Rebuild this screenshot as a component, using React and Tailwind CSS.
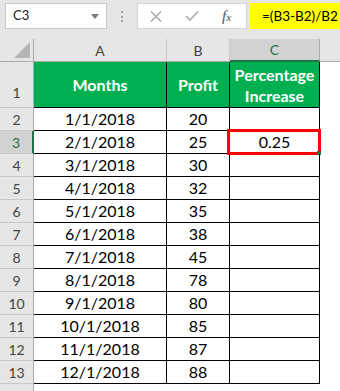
import React from "react";

const data = [
  ["1/1/2018", 20, ""],
  ["2/1/2018", 25, "0.25"],
  ["3/1/2018", 30, ""],
  ["4/1/2018", 32, ""],
  ["5/1/2018", 35, ""],
  ["6/1/2018", 38, ""],
  ["7/1/2018", 45, ""],
  ["8/1/2018", 78, ""],
  ["9/1/2018", 80, ""],
  ["10/1/2018", 85, ""],
  ["11/1/2018", 87, ""],
  ["12/1/2018", 88, ""],
];

function RowHead({ n, active, tall }) {
  return (
    <div
      className={
        "w-[34px] shrink-0 flex justify-center text-[14px] " +
        (tall ? "items-end pb-[4px] " : "items-center ") +
        (active
          ? "bg-[#d2d2d2] text-[#217346] border-r-2 border-r-[#217346] border-b border-b-[#c8c8c8]"
          : "bg-[#e6e6e6] text-[#444] border-r border-r-[#ababab] border-b border-b-[#c8c8c8]")
      }
    >
      {n}
    </div>
  );
}

export default function App() {
  return (
    <div className="w-[340px] h-[391px] overflow-hidden bg-white font-['Lato',sans-serif] text-black">
      {/* formula bar */}
      <div className="h-[39px] bg-[#e6e6e6] flex items-start pt-[3px]">
        <div className="ml-[5px] w-[102px] h-[26px] bg-white border border-[#c6c6c6] flex items-center justify-between pl-[7px] pr-[7px]">
          <span className="text-[13px] text-[#222]">C3</span>
          <svg width="8" height="5" viewBox="0 0 8 5">
            <path d="M0 0h8L4 5z" fill="#7a7a7a" />
          </svg>
        </div>
        <div className="ml-[14px] mt-[8px] flex flex-col gap-[2.5px]">
          <div className="w-[2px] h-[2px] bg-[#a0a0a0]" />
          <div className="w-[2px] h-[2px] bg-[#a0a0a0]" />
          <div className="w-[2px] h-[2px] bg-[#a0a0a0]" />
        </div>
        <div className="ml-[14px] w-[110px] h-[26px] bg-white border border-[#d4d4d4] flex items-center">
          <svg className="ml-[12px]" width="12" height="11" viewBox="0 0 12 11">
            <path d="M1 0.5l10 10M11 0.5l-10 10" stroke="#a6a6a6" strokeWidth="1.3" fill="none" />
          </svg>
          <svg className="ml-[23px]" width="14" height="10" viewBox="0 0 14 10">
            <path d="M1 5l4 4 8-8.5" stroke="#a6a6a6" strokeWidth="1.5" fill="none" />
          </svg>
          <span className="ml-[23px] font-['Liberation_Serif',serif] italic text-[#555] text-[15px] leading-none">
            f<span className="text-[11px]">x</span>
          </span>
        </div>
        <div className="ml-[3px] flex-1 h-[26px] bg-[#ffff00] flex items-center pl-[12px] text-[13.5px]">
          =(B3-B2)/B2
        </div>
      </div>

      {/* column headers */}
      <div className="flex h-[23px] bg-[#e6e6e6] text-[14px] text-[#444]">
        <div className="w-[34px] shrink-0 border-r border-r-[#ababab] border-b border-b-[#ababab] relative">
          <svg className="absolute left-[14px] top-[3px]" width="16" height="16" viewBox="0 0 16 16">
            <path d="M16 0V16H0z" fill="#b4b4b4" />
          </svg>
        </div>
        <div className="w-[133px] shrink-0 flex items-center justify-center border-r border-r-[#c8c8c8] border-b border-b-[#ababab]">A</div>
        <div className="w-[63px] shrink-0 flex items-center justify-center border-r border-r-[#c8c8c8] border-b border-b-[#ababab]">B</div>
        <div className="w-[90px] shrink-0 flex items-center justify-center bg-[#d2d2d2] text-[#217346] border-r border-r-[#ababab] border-b-2 border-b-[#217346]">C</div>
        <div className="flex-1 border-b border-b-[#ababab]" />
      </div>

      {/* row 1 */}
      <div className="flex h-[46px]">
        <RowHead n={1} tall />
        <div className="w-[133px] shrink-0 bg-[#00b050] border-r border-b border-black flex items-center justify-center text-white font-bold text-[16px]">
          Months
        </div>
        <div className="w-[63px] shrink-0 bg-[#00b050] border-r border-b border-black flex items-center justify-center text-white font-bold text-[16px]">
          Profit
        </div>
        <div className="w-[90px] shrink-0 bg-[#00b050] border-r border-b border-black flex flex-col items-center justify-center text-white font-bold text-[16px] leading-[21px]">
          <span>Percentage</span>
          <span>Increase</span>
        </div>
        <div className="flex-1" />
      </div>

      {data.map(([month, profit, pct], i) => {
        const rowNum = i + 2;
        const active = rowNum === 3;
        return (
          <div key={rowNum} className="flex h-[23px] text-[16px]">
            <RowHead n={rowNum} active={active} />
            <div className="w-[133px] shrink-0 border-r border-b border-black flex items-center justify-center">
              {month}
            </div>
            <div className="w-[63px] shrink-0 border-r border-b border-black flex items-center justify-center">
              {profit}
            </div>
            <div className="w-[90px] shrink-0 border-r border-b border-black flex items-center justify-center relative">
              {pct}
              {active && (
                <>
                  <div className="absolute -left-[3px] -top-[2px] w-[94px] h-[26px] border-[3px] border-[#ff0000]" />
                  <div className="absolute -right-[2px] -bottom-[2px] w-[4px] h-[4px] bg-[#217346]" />
                </>
              )}
            </div>
            <div className="flex-1" />
          </div>
        );
      })}

      {/* row 14 */}
      <div className="flex h-[23px]">
        <RowHead n={14} />
        <div className="flex-1" />
      </div>
    </div>
  );
}
